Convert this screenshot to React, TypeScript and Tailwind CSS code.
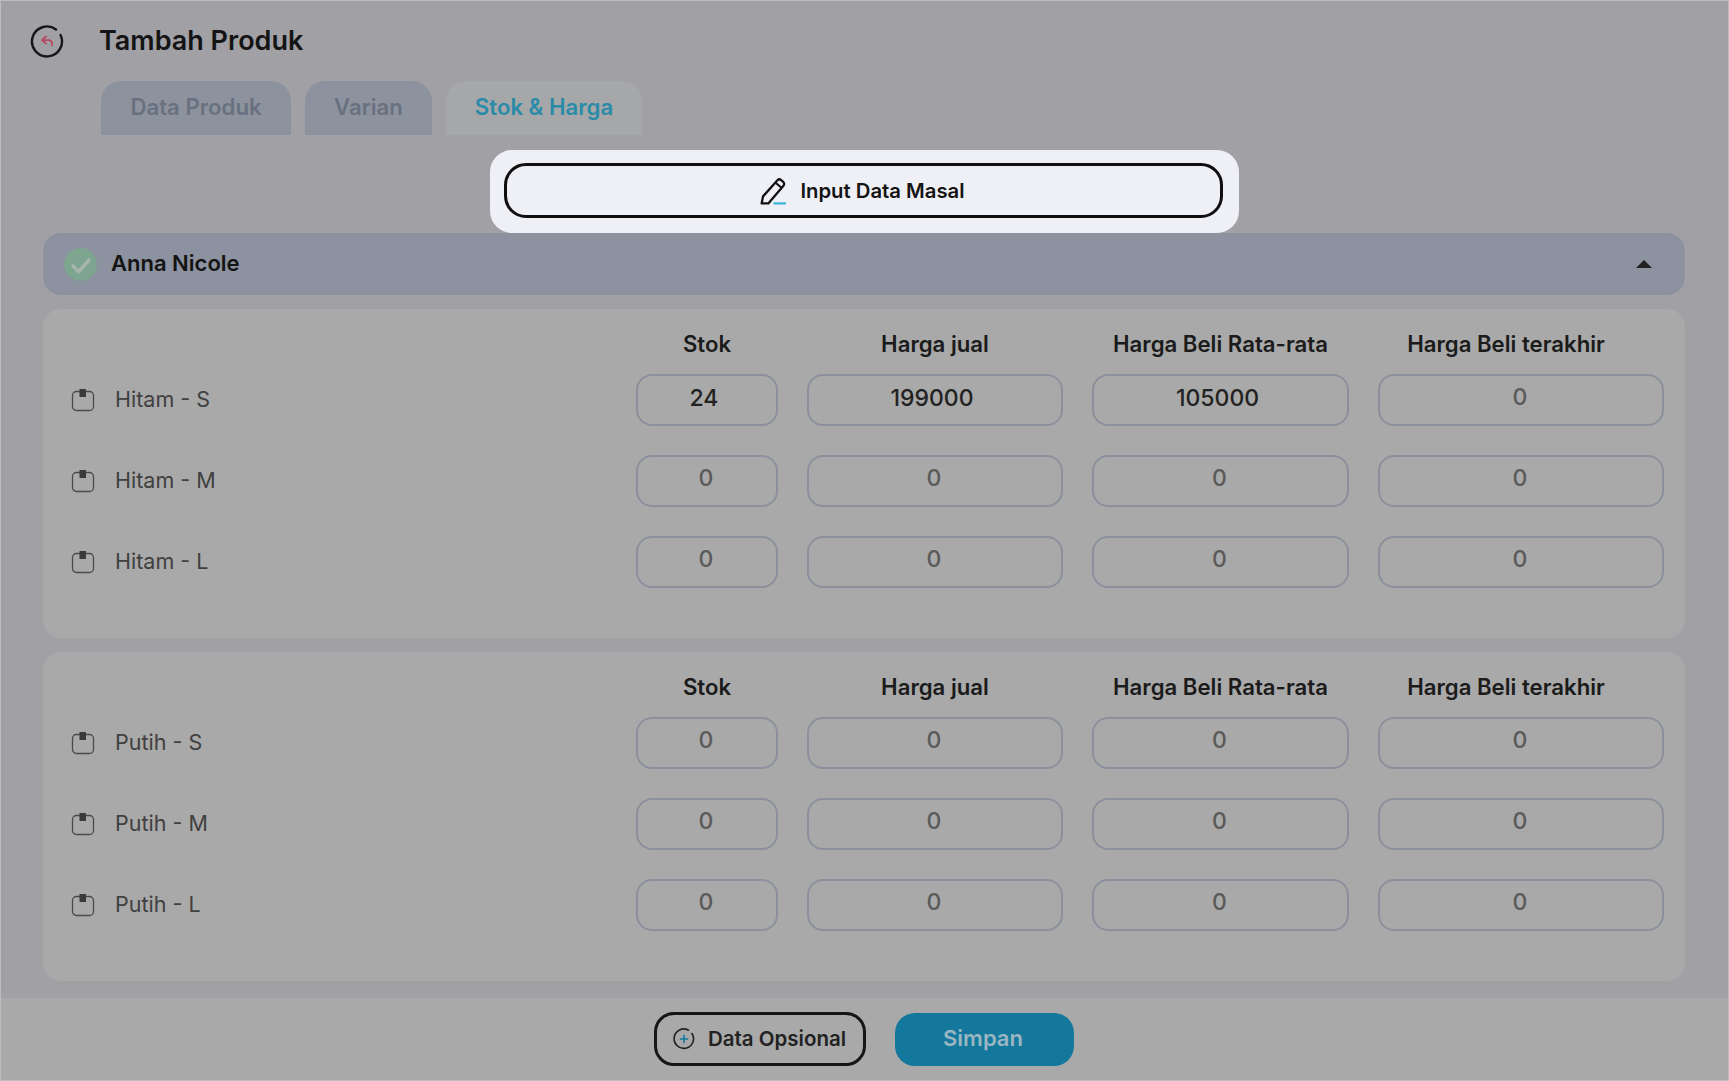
import React from 'react'

type Row = { label: string; values: string[] }

const headers = ['Stok', 'Harga jual', 'Harga Beli Rata-rata', 'Harga Beli terakhir']

const hitamRows: Row[] = [
  { label: 'Hitam - S', values: ['24', '199000', '105000', '0'] },
  { label: 'Hitam - M', values: ['0', '0', '0', '0'] },
  { label: 'Hitam - L', values: ['0', '0', '0', '0'] },
]

const putihRows: Row[] = [
  { label: 'Putih - S', values: ['0', '0', '0', '0'] },
  { label: 'Putih - M', values: ['0', '0', '0', '0'] },
  { label: 'Putih - L', values: ['0', '0', '0', '0'] },
]

function BackIcon() {
  return (
    <svg width="34" height="34" viewBox="0 0 34 34" fill="none">
      <path d="M26 5.5A15 15 0 1 0 30.5 11" stroke="#161616" strokeWidth="2.4" strokeLinecap="round" />
      <path
        d="M16 12.5l-4 3.6 4 3.6M12.2 16.1h6.6a3.2 3.2 0 0 1 3.2 3.2v2"
        stroke="#b5485c"
        strokeWidth="1.8"
        strokeLinecap="round"
        strokeLinejoin="round"
      />
    </svg>
  )
}

function PencilIcon() {
  return (
    <svg width="29" height="29" viewBox="0 0 28 28" fill="none">
      <path
        d="M2.5 25.5l1.4-6.8L17.8 3.2a2.6 2.6 0 0 1 3.6-.2l2 1.7a2.6 2.6 0 0 1 .2 3.7L9 25.5H2.5z"
        stroke="#111"
        strokeWidth="2.2"
        strokeLinejoin="round"
      />
      <path d="M16 5.5l6 5.2" stroke="#111" strokeWidth="2" />
      <path d="M14 25.5h12" stroke="#3fb4dc" strokeWidth="2.2" />
    </svg>
  )
}

function CheckCircle() {
  return (
    <svg width="33" height="33" viewBox="0 0 33 33">
      <circle cx="16.5" cy="16.5" r="16.5" fill="#7da58f" />
      <path d="M8 17l6.5 6.5L26 11" fill="none" stroke="#a8b5ae" strokeWidth="3.4" />
    </svg>
  )
}

function RowIcon() {
  return (
    <svg width="24" height="24" viewBox="0 0 24 24" fill="none">
      <rect x="1.5" y="3.5" width="21" height="19" rx="4" stroke="#4a4a4a" strokeWidth="1.3" />
      <rect x="8.5" y="1" width="6.5" height="8" fill="#3a3a3a" />
    </svg>
  )
}

function PlusCircle() {
  return (
    <svg width="22" height="22" viewBox="0 0 22 22" fill="none">
      <path d="M15.5 2.2A9.7 9.7 0 1 0 19 5.5" stroke="#222" strokeWidth="1.6" strokeLinecap="round" />
      <path d="M11 6.8v8.4M6.8 11h8.4" stroke="#14789c" strokeWidth="1.6" />
    </svg>
  )
}

function VariantCard({ rows }: { rows: Row[] }) {
  return (
    <div className="ml-[42px] mr-[43px] h-[329px] rounded-[18px] bg-[#a9a9a9] pl-[28px] pt-[20px]">
      <div className="grid grid-cols-[536px_142px_256px_257px_286px] gap-x-[29px] gap-y-[29px]">
        <div className="mb-[-14px]" />
        {headers.map((h, i) => (
          <div
            key={h}
            className={
              i === 3
                ? 'mb-[-14px] h-[30px] pr-[30px] text-center text-[22.2px] leading-[30px] font-semibold text-[#1b1b1b]'
                : 'mb-[-14px] h-[30px] text-center text-[22.2px] leading-[30px] font-semibold text-[#1b1b1b]'
            }
          >
            {h}
          </div>
        ))}
        {rows.map((row) => (
          <React.Fragment key={row.label}>
            <div className="flex h-[52px] items-center gap-[20px]">
              <RowIcon />
              <span className="pb-[1px] text-[21.5px] text-[#404040]">{row.label}</span>
            </div>
            {row.values.map((v, i) => (
              <div
                key={i}
                className={
                  v === '0'
                    ? 'flex h-[52px] items-center justify-center rounded-[16px] border-2 border-[#8b909c] pb-[6px] pr-[2px] text-[23px] font-medium text-[#5a5a5a]'
                    : 'flex h-[52px] items-center justify-center rounded-[16px] border-2 border-[#8b909c] pb-[3px] pr-[6px] text-[23px] font-medium text-[#222222]'
                }
              >
                {v}
              </div>
            ))}
          </React.Fragment>
        ))}
      </div>
    </div>
  )
}

export default function App() {
  return (
    <div className="flex h-[1081px] w-[1729px] flex-col overflow-hidden border border-[#bdbdbf] bg-[#a1a0a5] font-['Inter',sans-serif]">
      <div className="flex h-[80px] shrink-0 items-center gap-[35px] pl-[29px]">
        <BackIcon />
        <h1 className="text-[27px] font-semibold text-[#141414]">Tambah Produk</h1>
      </div>

      <div className="flex h-[54px] shrink-0 gap-[14px] pl-[100px] text-[22.2px] font-semibold">
        <div className="flex w-[190px] items-center justify-center rounded-t-[20px] bg-[#8d939e] pb-[2px] text-[#697180]">
          Data Produk
        </div>
        <div className="flex w-[127px] items-center justify-center rounded-t-[20px] bg-[#8d939e] pb-[2px] text-[#697180]">
          Varian
        </div>
        <div className="flex w-[196px] items-center justify-center rounded-t-[20px] bg-[#a6a7a8] pb-[2px] text-[#2a8ba8]">
          Stok &amp; Harga
        </div>
      </div>

      <div className="mx-auto mt-[15px] h-[83px] w-[749px] shrink-0 rounded-[22px] bg-[#eff0f5] pb-[14px] pl-[14px] pr-[16px] pt-[13px]">
        <button
          type="button"
          className="flex h-[55px] w-full items-center justify-center gap-[12px] rounded-[22px] border-[3px] border-[#0f0f0f] pr-[3px] pt-[1px] text-[20.3px] font-semibold text-[#141414]"
        >
          <PencilIcon />
          Input Data Masal
        </button>
      </div>

      <div className="ml-[42px] mr-[43px] flex h-[62px] shrink-0 items-center justify-between rounded-[18px] bg-[#8c92a0] pl-[21px] pr-[33px]">
        <div className="flex items-center gap-[14px]">
          <CheckCircle />
          <span className="pb-[1px] text-[22px] font-semibold text-[#141414]">Anna Nicole</span>
        </div>
        <div className="h-0 w-0 border-x-[8px] border-b-[8px] border-x-transparent border-b-[#222222]" />
      </div>

      <div className="mt-[14px] flex flex-col gap-[14px]">
        <VariantCard rows={hitamRows} />
        <VariantCard rows={putihRows} />
      </div>

      <div className="mt-[17px] flex flex-1 items-center justify-center gap-[29px] bg-[#a9a9a9] pr-[2px]">
        <button
          type="button"
          className="flex h-[54px] w-[212px] items-center justify-center gap-[13px] rounded-[20px] border-[3px] border-[#161616] text-[20.5px] font-semibold text-[#222222]"
        >
          <PlusCircle />
          Data Opsional
        </button>
        <button
          type="button"
          className="flex h-[53px] w-[179px] items-center justify-center rounded-[20px] bg-[#13789c] pb-[1px] pr-[2px] text-[22px] font-semibold text-[#9ab6c2]"
        >
          Simpan
        </button>
      </div>
    </div>
  )
}
